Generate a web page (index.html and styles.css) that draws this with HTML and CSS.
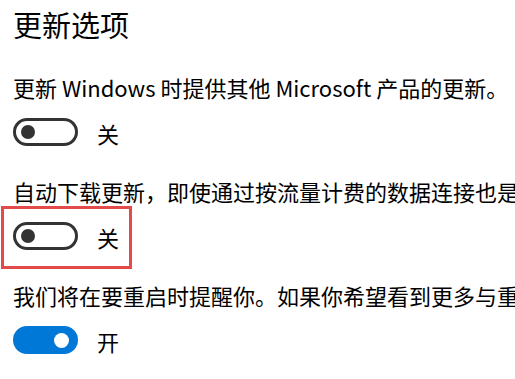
FILE: index.html
```html
<!DOCTYPE html>
<html lang="zh-CN">
  <head>
    <meta charset="utf-8" />
    <title>更新选项</title>
    <link rel="stylesheet" href="styles.css">
  </head>

  <body>
    <div class="page">
      <h1 class="title">更新选项</h1>

      <div class="option">
        <p class="option-text">更新 Windows 时提供其他 Microsoft 产品的更新。</p>
        <div class="toggle-row">
          <span class="toggle"><span class="knob"></span></span>
          <span class="toggle-label">关</span>
        </div>
      </div>

      <div class="option">
        <p class="option-text">自动下载更新，即使通过按流量计费的数据连接也是如此(可能会收取费用)</p>
        <div class="toggle-row highlight">
          <span class="toggle"><span class="knob"></span></span>
          <span class="toggle-label">关</span>
        </div>
      </div>

      <div class="option">
        <p class="option-text">我们将在要重启时提醒你。如果你希望看到更多与重启有关的通知，请打开此项。</p>
        <div class="toggle-row">
          <span class="toggle on"><span class="knob"></span></span>
          <span class="toggle-label">开</span>
        </div>
      </div>
    </div>
  </body>
</html>
```

FILE: styles.css
```css
html {
  font-family: "Noto Sans CJK SC", sans-serif;
  color: #000;
  background: #fff;
}

body {
  margin: 0;
}

.page {
  width: 515px;
  height: 379px;
  overflow: hidden;
  padding: 10px 0 0 13px;
  box-sizing: border-box;
  display: flex;
  flex-direction: column;
  gap: 34px;
}

.title {
  margin: 0 0 3px;
  font-size: 29px;
  line-height: 29px;
  font-weight: 400;
}

.option-text {
  margin: 0 0 20px;
  font-size: 22px;
  line-height: 22px;
  white-space: nowrap;
}

.toggle-row {
  display: flex;
  align-items: center;
  gap: 19px;
  height: 28px;
  width: fit-content;
}

.highlight {
  position: relative;
}

.highlight::after {
  content: "";
  position: absolute;
  top: -16px;
  bottom: -19px;
  left: -12px;
  right: -13px;
  border: 3px solid #e34b4b;
}

.toggle {
  width: 65px;
  height: 28px;
  box-sizing: border-box;
  border: 3px solid #333;
  border-radius: 14px;
  display: flex;
  align-items: center;
  padding: 0 5px;
}

.knob {
  width: 14px;
  height: 14px;
  border-radius: 50%;
  background: #333;
}

.toggle.on {
  background: #0078d7;
  border-color: #0078d7;
  justify-content: flex-end;
  padding-right: 6px;
}

.toggle.on .knob {
  width: 15px;
  height: 15px;
  background: #fff;
}

.toggle-label {
  font-size: 22px;
  line-height: 22px;
  margin-top: 2px;
}
```
